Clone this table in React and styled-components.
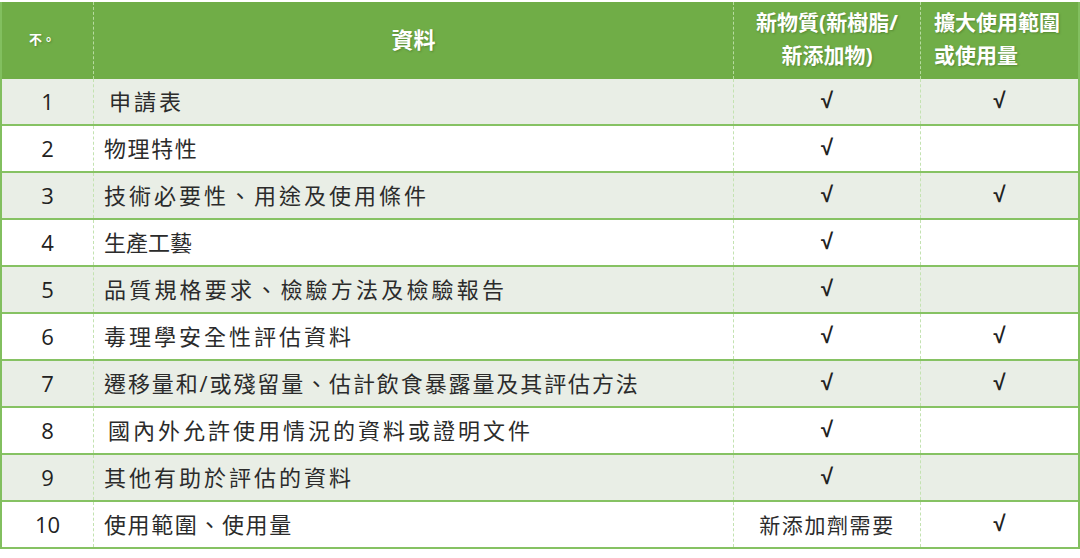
import React from "react";
import styled, { createGlobalStyle } from "styled-components";

const GlobalStyle = createGlobalStyle`
  body {
    margin: 0;
    background: #ffffff;
    font-family: "Open Sans", "Noto Sans CJK TC", sans-serif;
  }
`;

const COLS = "91px 640px 187px 158px";

const Table = styled.div`
  width: 1076px;
  margin-top: 2px;
  border-left: 2px solid #82bf5f;
  border-right: 2px solid #82bf5f;
`;

const HeadRow = styled.div`
  display: grid;
  grid-template-columns: ${COLS};
  height: 77px;
  background: #70ad47;
  color: #ffffff;
  font-weight: 700;
  text-shadow: 1px 1px 2px rgba(40, 70, 20, 0.35);
`;

const HeadCell = styled.div`
  display: flex;
  flex-direction: column;
  justify-content: center;
  align-items: ${(p) => p.align || "center"};
  padding-left: ${(p) => p.pad || 0}px;
  padding-bottom: 3px;
  font-size: ${(p) => p.size || 21}px;
  line-height: 33px;
  white-space: nowrap;
  border-left: ${(p) => (p.first ? "none" : "1px dashed #b7dba0")};
`;

const Row = styled.div`
  display: grid;
  grid-template-columns: ${COLS};
  height: 45px;
  background: ${(p) => (p.shaded ? "#e9eee6" : "#ffffff")};
  border-bottom: 2px solid #86c263;
  color: #2b2b2b;
`;

const Cell = styled.div`
  display: flex;
  align-items: center;
  justify-content: ${(p) => (p.left ? "flex-start" : "center")};
  padding-left: ${(p) => p.pad || 0}px;
  padding-bottom: ${(p) => (p.left ? 3 : 1)}px;
  border-left: ${(p) => (p.first ? "none" : "1px dashed #c3e2b0")};
  font-size: ${(p) => p.size || 22}px;
  letter-spacing: ${(p) => p.spacing || 0}px;
  white-space: nowrap;
`;

const Num = styled.span`
  font-size: 22px;
  color: #222222;
`;

const Check = styled.span`
  font-size: 22px;
  font-weight: 700;
  color: #222222;
  font-family: "Liberation Sans", "Noto Sans CJK TC", sans-serif;
`;

const rows = [
  { n: 1, text: "申請表", a: true, b: true, pad: 15, sp: 3 },
  { n: 2, text: "物理特性", a: true, sp: 1.6 },
  { n: 3, text: "技術必要性、用途及使用條件", a: true, b: true, sp: 3 },
  { n: 4, text: "生產工藝", a: true, sp: 0 },
  { n: 5, text: "品質規格要求、檢驗方法及檢驗報告", a: true, sp: 3.2 },
  { n: 6, text: "毒理學安全性評估資料", a: true, b: true, sp: 3 },
  { n: 7, text: "遷移量和/或殘留量、估計飲食暴露量及其評估方法", a: true, b: true, sp: 1.9 },
  { n: 8, text: "國內外允許使用情況的資料或證明文件", a: true, pad: 14, sp: 3 },
  { n: 9, text: "其他有助於評估的資料", a: true, sp: 3 },
  { n: 10, text: "使用範圍、使用量", a: "新添加劑需要", b: true, sp: 1.6 },
];

const mark = (v) =>
  v === true ? <Check>√</Check> : v ? <span>{v}</span> : null;

export default function App() {
  return (
    <>
      <GlobalStyle />
      <Table>
        <HeadRow>
          <HeadCell first size={13} align="flex-start" pad={27}>
            不。
          </HeadCell>
          <HeadCell size={22}>資料</HeadCell>
          <HeadCell size={21}>
            <span>新物質(新樹脂/</span>
            <span>新添加物)</span>
          </HeadCell>
          <HeadCell align="flex-start" pad={13} size={21}>
            <span>擴大使用範圍</span>
            <span>或使用量</span>
          </HeadCell>
        </HeadRow>
        {rows.map((r, i) => (
          <Row key={r.n} shaded={i % 2 === 0}>
            <Cell first>
              <Num>{r.n}</Num>
            </Cell>
            <Cell left spacing={r.sp} pad={r.pad || 10}>
              {r.text}
            </Cell>
            <Cell spacing={typeof r.a === "string" ? 1.6 : 0} size={21}>
              {mark(r.a)}
            </Cell>
            <Cell>{mark(r.b)}</Cell>
          </Row>
        ))}
      </Table>
    </>
  );
}
